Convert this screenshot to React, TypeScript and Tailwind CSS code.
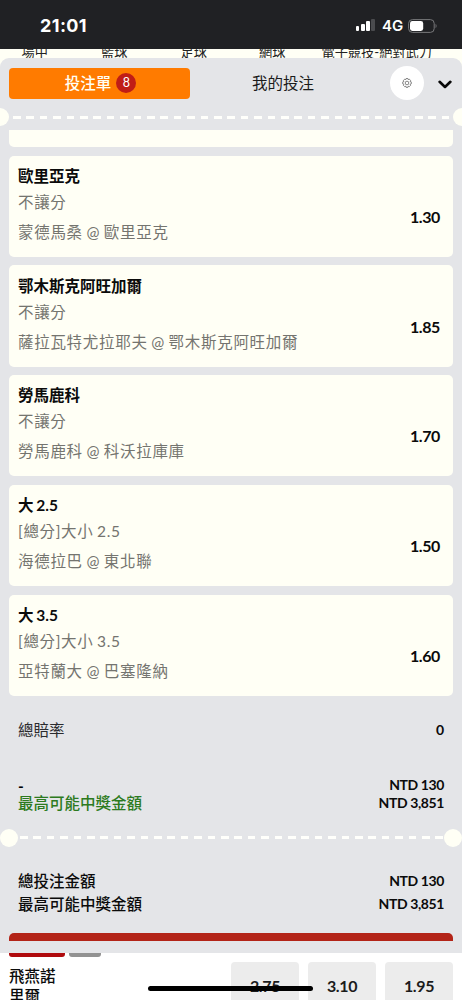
interface BetSelection {
  id: number;
  title: string;
  market: string;
  match: string;
  odds: string;
}

const sports = [
  { id: 'field', label: '場中', className: 'ml-[21.5px] w-[79.5px]' },
  { id: 'basketball', label: '籃球', className: 'w-[79.5px]' },
  { id: 'soccer', label: '足球', className: 'w-[78.5px]' },
  { id: 'tennis', label: '網球', className: 'w-[62.5px]' },
  { id: 'esports', label: '電子競技-絕對武力', className: '' },
];

const selections: BetSelection[] = [
  { id: 1, title: '歐里亞克', market: '不讓分', match: '蒙德馬桑 @ 歐里亞克', odds: '1.30' },
  { id: 2, title: '鄂木斯克阿旺加爾', market: '不讓分', match: '薩拉瓦特尤拉耶夫 @ 鄂木斯克阿旺加爾', odds: '1.85' },
  { id: 3, title: '勞馬鹿科', market: '不讓分', match: '勞馬鹿科 @ 科沃拉庫庫', odds: '1.70' },
  { id: 4, title: '大 2.5', market: '[總分]大小 2.5', match: '海德拉巴 @ 東北聯', odds: '1.50' },
  { id: 5, title: '大 3.5', market: '[總分]大小 3.5', match: '亞特蘭大 @ 巴塞隆納', odds: '1.60' },
];

const marketOdds = ['2.75', '3.10', '1.95'];

const StatusBar = () => (
  <div className="flex h-[49px] shrink-0 items-center bg-[#202124] pl-[40px] pr-[24px] text-white">
    <span className="mt-[2px] font-['Inter',sans-serif] text-[18px] leading-none font-bold tracking-[0.4px]">21:01</span>
    <div className="mt-[2px] ml-auto flex items-center">
      <div className="flex h-[11px] items-end gap-[1.6px]">
        <span className="h-[5px] w-[3.6px] rounded-[1px] bg-white" />
        <span className="h-[7px] w-[3.6px] rounded-[1px] bg-white" />
        <span className="h-[10px] w-[3.6px] rounded-[1px] bg-white" />
        <span className="h-[12px] w-[3.6px] rounded-[1px] bg-[#4a4b4e]" />
      </div>
      <span className="ml-[7px] w-[26px] font-['Inter',sans-serif] text-[15px] leading-none font-semibold">4G</span>
      <svg width="30" height="14" viewBox="0 0 30 14" fill="none">
        <rect x="0.6" y="0.6" width="25.6" height="12.8" rx="3.8" stroke="#77787a" />
        <rect x="2" y="2" width="13.2" height="10" rx="2.4" fill="#fff" />
        <path d="M27.6 4.8v4.4c1.3-.7 1.3-3.7 0-4.4z" fill="#77787a" />
      </svg>
    </div>
  </div>
);

const Dashes = ({ className }: { className: string }) => (
  <div
    className={`h-[3px] bg-[repeating-linear-gradient(90deg,#fffffb_0_7.6px,transparent_7.6px_13.4px)] ${className}`}
  />
);

const BetCard = ({ bet }: { bet: BetSelection }) => (
  <div className="flex h-[101.2px] shrink-0 rounded-[5px] bg-[#fffff5] pr-[13px] pl-[9px]">
    <div className="flex-1 pt-[10.3px]">
      <h3 className="h-[26px] text-[15.5px] leading-[20px] font-bold text-[#0b0b0b] [word-spacing:-1px]">{bet.title}</h3>
      <p className="h-[30px] text-[15.5px] leading-[20px] tracking-[0.65px] text-[#74746f] [word-spacing:-1px]">{bet.market}</p>
      <p className="text-[15.5px] leading-[20px] tracking-[0.7px] text-[#74746f] [word-spacing:-1px]">{bet.match}</p>
    </div>
    <span className="pt-[51.3px] text-[16px] leading-[20px] font-bold tracking-[-0.4px] text-[#0b0b0b]">{bet.odds}</span>
  </div>
);

const BetSlip = () => (
  <div className="flex h-[895px] shrink-0 flex-col overflow-hidden rounded-t-[9px] bg-[#e4e5e8]">
    {/* Tabs */}
    <div className="flex h-[50px] shrink-0 items-center pl-[9px]">
      <div className="flex h-[31px] w-[181px] items-center justify-center gap-[5px] rounded-[4px] bg-[#ff7b00] pl-[2px]">
        <span className="pt-px text-[15.5px] leading-none font-medium text-[#fffff5]">投注單</span>
        <span className="flex size-5 items-center justify-center rounded-full bg-[#c01d16] pt-px text-[12.5px] leading-none text-white">
          8
        </span>
      </div>
      <span className="ml-[62px] w-[138px] pt-px text-[15.5px] leading-none text-[#1b1b1b]">我的投注</span>
      <button className="flex size-[34px] items-center justify-center rounded-full bg-white">
        <svg width="10" height="10" viewBox="0 0 20 20" fill="none" stroke="#4a4a4a" strokeWidth="1.3">
          <path d="M8.2 1h3.6l.6 2.2 2.2-.9 2.5 2.5-.9 2.1 2.3.9v4l-2.3.8.9 2.2-2.5 2.5-2.2-.9-.6 2.3H8.2l-.6-2.3-2.2.9-2.5-2.5.9-2.2-2.3-.8v-4l2.3-.9-.9-2.1 2.5-2.5 2.2.9z" />
          <circle cx="10" cy="10" r="3.6" />
        </svg>
      </button>
      <svg className="mt-[2px] ml-[14px]" width="14" height="9" viewBox="0 0 14 9" fill="none" stroke="#080808" strokeWidth="2.6">
        <path d="M1.6 1.8 7 7l5.4-5.2" strokeLinecap="round" strokeLinejoin="round" />
      </svg>
    </div>

    {/* Ticket edge */}
    <div className="flex h-[18px] shrink-0 items-center">
      <span className="h-[18px] w-[9px] rounded-r-full bg-[#fffff5]" />
      <Dashes className="ml-[4px] w-[436px]" />
      <span className="ml-auto h-[18px] w-[9px] rounded-l-full bg-[#fffff5]" />
    </div>

    {/* Selections */}
    <div className="mt-[4px] flex shrink-0 flex-col gap-[8.6px] px-[9px]">
      <div className="h-[17px] rounded-b-[5px] bg-[#fffff5]" />
      {selections.map((bet) => (
        <BetCard key={bet.id} bet={bet} />
      ))}
    </div>

    {/* Totals */}
    <div className="flex h-[142.6px] shrink-0 flex-col px-[18px] pt-[24px] text-[15.5px] leading-[20px]">
      <div className="flex h-[56px] justify-between">
        <span className="text-[#2b2b2e]">總賠率</span>
        <span className="text-[14px] font-bold text-[#0b0b0b]">0</span>
      </div>
      <div className="flex h-[18px] justify-between">
        <span className="font-bold">-</span>
        <span className="text-[14px] leading-[18px] font-bold tracking-[-0.4px] text-[#0b0b0b]">NTD 130</span>
      </div>
      <div className="flex justify-between">
        <span className="leading-[18px] font-medium text-[#2c7a20]">最高可能中獎金額</span>
        <span className="text-[14px] leading-[18px] font-bold tracking-[-0.4px] text-[#0b0b0b]">NTD 3,851</span>
      </div>
    </div>

    <div className="-mt-[10px] flex h-[18px] shrink-0 items-center">
      <span className="size-[18px] rounded-full bg-[#fffff5]" />
      <Dashes className="ml-[2px] flex-1" />
      <span className="size-[18px] rounded-full bg-[#fffff5]" />
    </div>

    <div className="mt-[22.4px] flex shrink-0 flex-col px-[18px] text-[15.5px] font-medium text-[#0b0b0b]">
      <div className="flex h-[24px] items-center justify-between leading-[20px]">
        <span>總投注金額</span>
        <span className="text-[14px] font-bold tracking-[-0.4px]">NTD 130</span>
      </div>
      <div className="flex h-[23px] items-center justify-between leading-[20px]">
        <span>最高可能中獎金額</span>
        <span className="text-[14px] font-bold tracking-[-0.4px]">NTD 3,851</span>
      </div>
    </div>

    <div className="mx-[9px] mt-[17px] h-[8px] shrink-0 rounded-t-[5px] bg-[#b32418]" />
  </div>
);

const MatchRow = () => (
  <div className="flex h-[47px] shrink-0 overflow-hidden bg-white pr-[9px] pl-[9px]">
    <div className="w-[222px]">
      <div className="flex gap-[4px]">
        <span className="h-[4px] w-[56px] rounded-b-[3px] bg-[#b00b0e]" />
        <span className="h-[4px] w-[32px] rounded-b-[3px] bg-[#929292]" />
      </div>
      <div className="mt-[9px] text-[15.5px] leading-[20px] font-medium text-[#0b0b0b]">
        <p>飛燕諾</p>
        <p>里爾</p>
      </div>
    </div>
    <div className="mt-[9px] flex flex-1 gap-[9px]">
      {marketOdds.map((value) => (
        <div key={value} className="h-[50px] flex-1 rounded-[4px] bg-[#ececec] pt-[14px] text-center text-[16px] leading-[20px] font-bold tracking-[-0.4px] text-[#1b1b1b]">
          {value}
        </div>
      ))}
    </div>
  </div>
);

const App = () => {
  return (
    <div className="relative flex h-[1000px] w-[462px] flex-col overflow-hidden bg-[#fffff5] font-['Lato','Noto_Sans_CJK_TC',sans-serif]">
      <StatusBar />
      {/* Sport labels scrolled behind the status bar */}
      <div className="flex h-[9px] shrink-0 items-end overflow-hidden text-[13.2px] leading-[11px] text-[#222]">
        {sports.map((sport) => (
          <span key={sport.id} className={`shrink-0 whitespace-nowrap ${sport.className}`}>
            {sport.label}
          </span>
        ))}
      </div>
      <div className="bg-[#fffff5]">
        <BetSlip />
      </div>
      <MatchRow />
      {/* Home indicator */}
      <div className="absolute bottom-[9px] left-[148px] h-[5px] w-[165px] rounded-full bg-black" />
    </div>
  );
};

export default App;
